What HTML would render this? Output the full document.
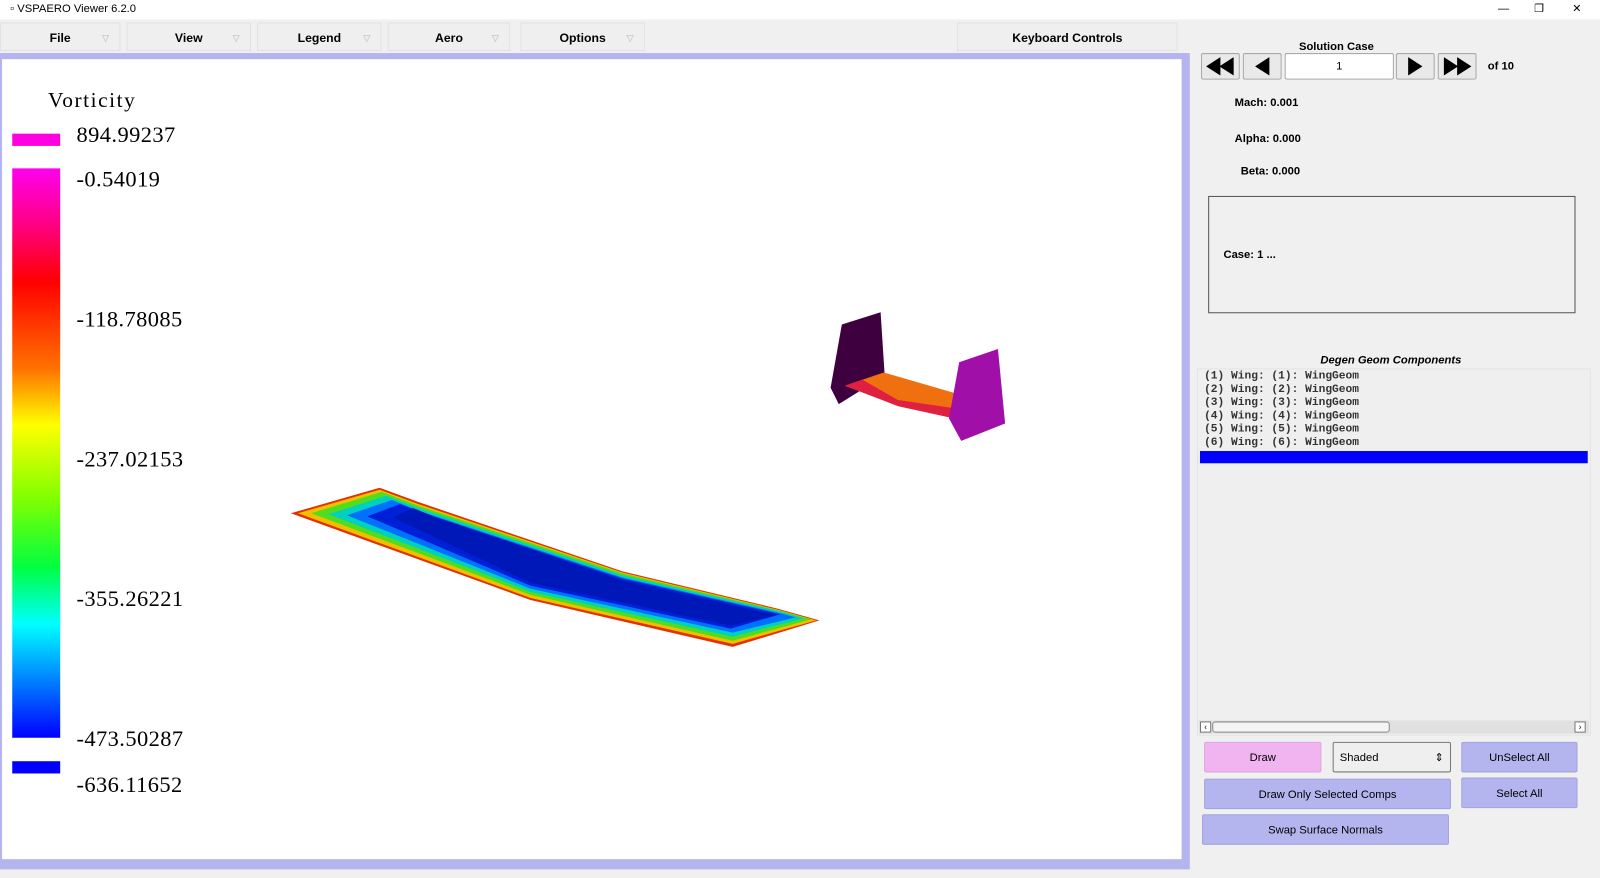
<!DOCTYPE html>
<html><head><meta charset="utf-8"><style>
*{margin:0;padding:0;box-sizing:border-box}
body{width:1600px;height:862px;background:#f0f0f0;font-family:"Liberation Sans",Arial,sans-serif;position:relative;overflow:hidden;font-size:12px}
#w{position:absolute;left:0;top:0;width:1568px;height:845px;transform:scale(1.0204);transform-origin:0 0}
.abs{position:absolute}
.title{left:0;top:0;width:1568px;height:19px;background:#fff;font-size:11px;line-height:19px;padding-left:10px}
.menu{top:22px;height:28px;background:#efefef;border:1px solid #e2e2e2;font-weight:bold;font-size:12px;line-height:28px;text-align:center}
.menu i{position:absolute;right:10px;top:0;color:#ccc;font-style:normal;font-size:9px}
.nav{top:52px;height:26px;background:#e9e9e9;border:1px solid #a9a9a9;border-radius:2px}
.btn{height:30px;border-radius:2px;text-align:center;line-height:30px;font-size:11px;background:#b4b4ee;border:1px solid #a4a4dc}
.lbl{font-weight:bold;font-size:11px}
.num{font-family:"Liberation Serif",serif;font-size:22px;left:75px;letter-spacing:0.4px}
.mono{font-family:"Liberation Mono",monospace;font-size:11px;font-weight:bold;line-height:13px;color:#333}
</style></head><body><div id="w">
<div class="abs title">▫ VSPAERO Viewer 6.2.0<span style="position:absolute;right:18px">—&nbsp;&nbsp;&nbsp;&nbsp;&nbsp;&nbsp;&nbsp;&nbsp;❐&nbsp;&nbsp;&nbsp;&nbsp;&nbsp;&nbsp;&nbsp;&nbsp;&nbsp;✕</span></div>
<div class="abs menu" style="left:0;width:118px">File<i>▽</i></div>
<div class="abs menu" style="left:124px;width:122px">View<i>▽</i></div>
<div class="abs menu" style="left:252px;width:122px">Legend<i>▽</i></div>
<div class="abs menu" style="left:380px;width:120px">Aero<i>▽</i></div>
<div class="abs menu" style="left:510px;width:122px">Options<i>▽</i></div>
<div class="abs menu" style="left:938px;width:216px">Keyboard Controls</div>
<div class="abs" style="left:0;top:52px;width:1167px;height:800px;background:#b4b4ee"></div>
<div class="abs" style="left:2px;top:58px;width:1156px;height:784px;background:#fff"></div>
<div class="abs" style="left:1166px;top:52px;width:402px;height:800px;background:#f0f0f0"></div>
<div class="abs" style="left:47px;top:86px;font-family:'Liberation Serif',serif;font-size:21px;letter-spacing:1.5px">Vorticity</div>
<div class="abs" style="left:12px;top:131px;width:47px;height:12px;background:#ff00e0"></div>
<div class="abs" style="left:12px;top:165px;width:47px;height:558px;background:linear-gradient(#ff00ee 0%,#ff0080 10%,#ff0000 20%,#ff7000 35%,#ffff00 45%,#80ff00 58%,#00ff40 70%,#00ffff 80%,#0080ff 90%,#0000ff 100%)"></div>
<div class="abs" style="left:12px;top:746px;width:47px;height:12px;background:#0000ff"></div>
<div class="abs num" style="top:119px">894.99237</div>
<div class="abs num" style="top:163px">-0.54019</div>
<div class="abs num" style="top:300px">-118.78085</div>
<div class="abs num" style="top:437px">-237.02153</div>
<div class="abs num" style="top:574px">-355.26221</div>
<div class="abs num" style="top:711px">-473.50287</div>
<div class="abs num" style="top:756px">-636.11652</div>
<svg class="abs" style="left:0;top:0" width="1160" height="860">
<polygon points="285,503 372,478 410,492 610,560 760,596 803,608 718,634 520,588" fill="#e53000"/>
<polygon points="292,503 372,480 410,494 610,561 760,597 800,608 718,631 520,586" fill="#f0c000"/>
<polygon points="305,503 374,482 411,496 610,562 762,598 795,607 718,628 520,583" fill="#50dd20"/>
<polygon points="322,504 378,486 413,499 610,564 764,599 788,606 718,624 520,580" fill="#00d0c0"/>
<polygon points="340,505 384,490 415,502 610,566 765,601 780,605 718,620 520,577" fill="#0070ff"/>
<polygon points="360,506 392,494 418,504 610,567 765,602 716,616 520,574" fill="#0020d8"/>
<polygon points="385,507 405,498 425,506 610,569 760,603 716,613 520,571" fill="#0018b8"/>
<polygon points="825,318 863,306 867,368 822,396 814,380" fill="#3e003e"/>
<polygon points="828,378 866,365 935,385 935,410 880,398" fill="#f07010"/>
<polygon points="828,378 845,372 880,392 935,400 935,410 880,398" fill="#e02040"/>
<polygon points="940,355 978,342 985,415 942,432 930,410" fill="#a010a8"/>
</svg>
<div class="abs lbl" style="left:1273px;top:40px">Solution Case</div>
<div class="abs nav" style="left:1177px;width:38px"><svg width="36" height="24"><polygon points="4,12 18,3 18,21" /><polygon points="17,12 31,3 31,21"/></svg></div>
<div class="abs nav" style="left:1218px;width:38px"><svg width="36" height="24"><polygon points="11,12 25,3 25,21"/></svg></div>
<div class="abs nav" style="left:1259px;width:107px;background:#fff;text-align:center;line-height:24px;font-size:11px">1</div>
<div class="abs nav" style="left:1368px;width:38px"><svg width="36" height="24"><polygon points="11,3 25,12 11,21"/></svg></div>
<div class="abs nav" style="left:1409px;width:38px"><svg width="36" height="24"><polygon points="5,3 19,12 5,21"/><polygon points="18,3 32,12 18,21"/></svg></div>
<div class="abs lbl" style="left:1458px;top:59px">of 10</div>
<div class="abs lbl" style="left:1210px;top:95px">Mach: 0.001</div>
<div class="abs lbl" style="left:1210px;top:130px">Alpha: 0.000</div>
<div class="abs lbl" style="left:1216px;top:162px">Beta: 0.000</div>
<div class="abs" style="left:1184px;top:192px;width:360px;height:115px;border:1px solid #555;background:#f0f0f0"></div>
<div class="abs lbl" style="left:1199px;top:244px">Case: 1 ...</div>
<div class="abs lbl" style="left:1294px;top:347px;font-style:italic">Degen Geom Components</div>
<div class="abs" style="left:1173px;top:361px;width:386px;height:360px;background:#efefef;border:1px solid #e4e4e4"></div>
<div class="abs mono" style="left:1180px;top:363px">(1) Wing: (1): WingGeom<br>(2) Wing: (2): WingGeom<br>(3) Wing: (3): WingGeom<br>(4) Wing: (4): WingGeom<br>(5) Wing: (5): WingGeom<br>(6) Wing: (6): WingGeom</div>
<div class="abs" style="left:1176px;top:442px;width:380px;height:12px;background:#0000ff"></div>
<div class="abs" style="left:1175px;top:706px;width:382px;height:13px;background:#e0e0e0"></div>
<div class="abs" style="left:1176px;top:707px;width:11px;height:11px;border:1px solid #777;background:#fff;font-size:8px;line-height:9px;text-align:center">‹</div>
<div class="abs" style="left:1188px;top:707px;width:174px;height:11px;border:1px solid #888;border-radius:3px;background:#f4f4f4"></div>
<div class="abs" style="left:1543px;top:707px;width:11px;height:11px;border:1px solid #777;background:#fff;font-size:8px;line-height:9px;text-align:center">›</div>
<div class="abs btn" style="left:1180px;top:727px;width:115px;background:#f0b4f0;border-color:#e0a4e0">Draw</div>
<div class="abs btn" style="left:1306px;top:727px;width:116px;background:#efefef;border-color:#777;text-align:left;padding-left:6px">Shaded<span style="position:absolute;right:6px">⇕</span></div>
<div class="abs btn" style="left:1432px;top:727px;width:114px">UnSelect All</div>
<div class="abs btn" style="left:1180px;top:763px;width:242px">Draw Only Selected Comps</div>
<div class="abs btn" style="left:1432px;top:762px;width:114px">Select All</div>
<div class="abs btn" style="left:1178px;top:798px;width:242px">Swap Surface Normals</div>
</div></body></html>
